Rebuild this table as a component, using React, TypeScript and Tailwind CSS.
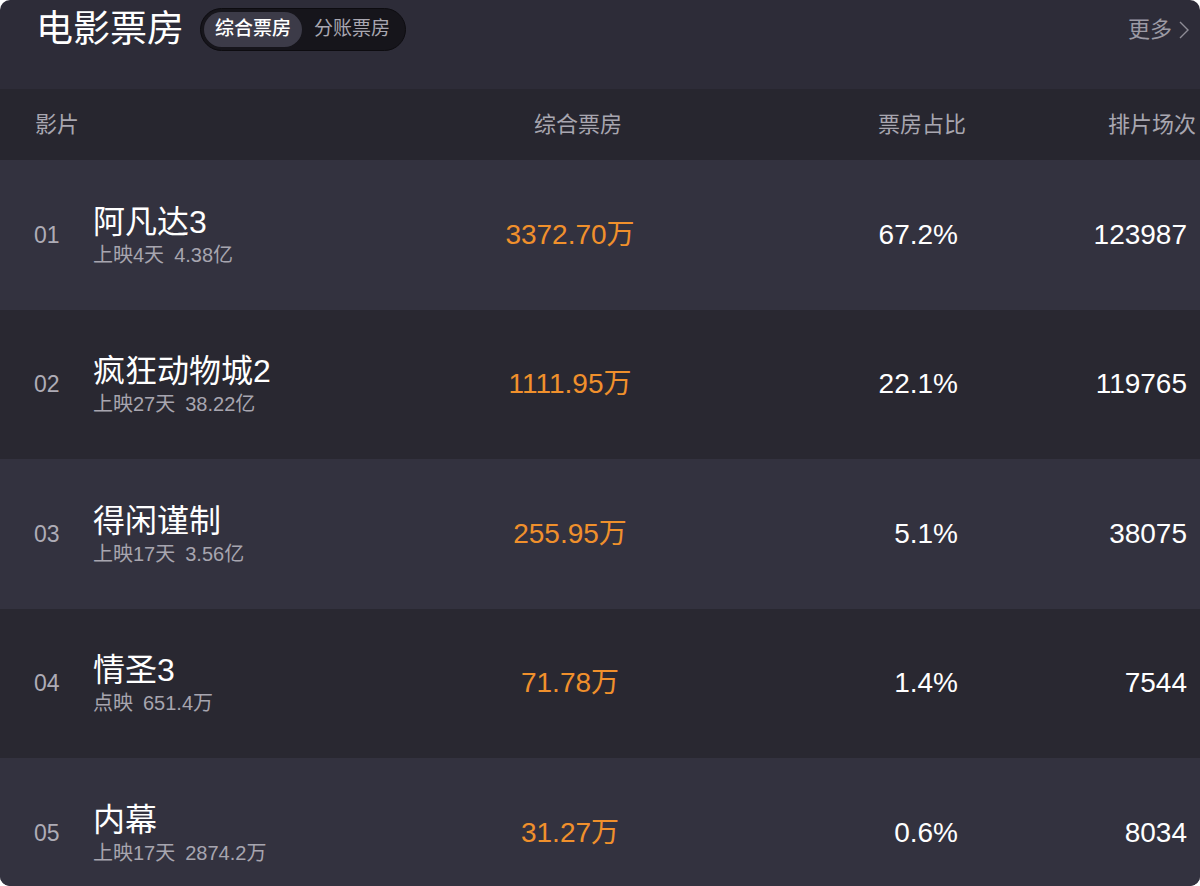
const MOVIES = [
  { rank: '01', name: '阿凡达3', days: '上映4天', total: '4.38亿', box: '3372.70万', share: '67.2%', shows: '123987' },
  { rank: '02', name: '疯狂动物城2', days: '上映27天', total: '38.22亿', box: '1111.95万', share: '22.1%', shows: '119765' },
  { rank: '03', name: '得闲谨制', days: '上映17天', total: '3.56亿', box: '255.95万', share: '5.1%', shows: '38075' },
  { rank: '04', name: '情圣3', days: '点映', total: '651.4万', box: '71.78万', share: '1.4%', shows: '7544' },
  { rank: '05', name: '内幕', days: '上映17天', total: '2874.2万', box: '31.27万', share: '0.6%', shows: '8034' },
]

const font = "font-['Liberation_Sans','Noto_Sans_CJK_SC',sans-serif]"

export default function App() {
  return (
    <main className={`h-[886px] w-[1200px] bg-white ${font}`}>
      <div className="h-full overflow-hidden rounded-[10px] bg-[#2d2c38]">
        {/* Header */}
        <header className="flex h-[89px] items-start justify-between pl-[36px] pr-[10px] pt-[6px]">
          <div className="flex items-center gap-[16px]">
            <h1 className="pt-[2px] text-[37px] leading-[44px] text-white">电影票房</h1>
            <div className="flex h-[43px] items-center rounded-full border border-[#0d0c10] bg-[#16151b] px-[3px]">
              <span className="flex h-[35px] items-center rounded-full bg-[#3c3b48] px-[11px] text-[19px] font-medium text-white">
                综合票房
              </span>
              <span className="px-[12px] text-[19px] text-[#a9a7b1]">分账票房</span>
            </div>
          </div>
          <a className="mt-[7px] flex items-center gap-[6px] text-[22px] text-[#9c9aa4]">
            更多
            <svg width="12" height="22" viewBox="0 0 12 22" fill="none">
              <polyline points="2,3 10,11 2,19" stroke="#8e8c96" strokeWidth="1.4" />
            </svg>
          </a>
        </header>

        {/* Table header */}
        <div className="flex h-[71px] items-center bg-[#27262f] text-[22px] text-[#a8a6b0]">
          <div className="w-[460px] pl-[35px]">影片</div>
          <div className="w-[236px] text-center">综合票房</div>
          <div className="w-[270px] text-right">票房占比</div>
          <div className="flex-1 pr-[4px] text-right">排片场次</div>
        </div>

        {/* Rows */}
        {MOVIES.map((m, i) => (
          <div
            key={m.rank}
            className={`flex h-[149.5px] items-center ${i % 2 === 0 ? 'bg-[#33323f]' : 'bg-[#292831]'}`}
          >
            <div className="flex w-[460px] items-center">
              <span className="w-[93px] pl-[34px] text-[23px] text-[#aeacb6]">{m.rank}</span>
              <div className="flex flex-col">
                <span className="text-[32px] leading-[36px] text-white">{m.name}</span>
                <span className="mt-[4px] text-[20px] leading-[22px] text-[#a7a5af]">
                  {m.days}
                  <span className="ml-[10px]">{m.total}</span>
                </span>
              </div>
            </div>
            <div className="w-[220px] text-center text-[28px] text-[#f0902c]">{m.box}</div>
            <div className="w-[278px] text-right text-[28px] text-white">{m.share}</div>
            <div className="w-[229px] text-right text-[28px] text-white">{m.shows}</div>
          </div>
        ))}
      </div>
    </main>
  )
}
